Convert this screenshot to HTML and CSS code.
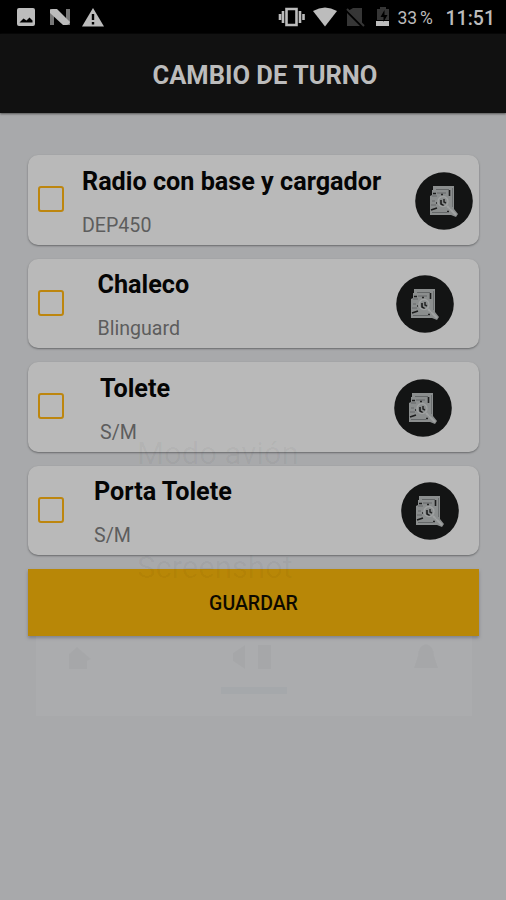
FILE: index.html
```
<!DOCTYPE html>
<html lang="es">
<head>
    <meta charset="UTF-8">
    <meta name="viewport" content="width=device-width, initial-scale=1.0">
    <link rel="stylesheet" href="styles.css">
    <title>Cambio de turno</title>
</head>
<body>

<!-- Icono compartido por todas las tarjetas -->
<svg width="0" height="0" class="defs">
    <symbol id="inspeccion" viewBox="0 0 58 58">
        <circle cx="29" cy="29" r="28.800" fill="#131414"/>
        <path d="M18 14h21v23l4 5-2 3-5-2H15V24l2-1v-5h1z" fill="#8b8e8e"/>
        <path d="M21 17.500h13M17 24h5M17 29h3M16 33h5M17 40.500h15M22 21h9" stroke="#646768" stroke-width="1" fill="none"/>
        <path d="M37.500 16v19" stroke="#6c6f70" stroke-width="1"/>
        <path d="M34.500 18v6M18 21.500h3M16 38l6-2M34 36l2 2M26 28v4l3 2" stroke="#1b1c1c" stroke-width="1.6" fill="none"/>
        <circle cx="28" cy="29.500" r="5" fill="none" stroke="#a0a2a2" stroke-width="1.3"/>
        <path d="M32 34l9 9" stroke="#a0a2a2" stroke-width="2"/>
        <path d="M29 27v3l2 1M32 39.500h2M26 22.500h2M21 31h1" stroke="#242525" stroke-width="1.5" fill="none"/>
    </symbol>
</svg>

<div class="status">
    <svg class="status-left" width="90" height="22" viewBox="0 0 90 22">
        <path fill="#bcbcbc" fill-rule="evenodd" d="M3 2h14q2 0 2 2v14q0 2-2 2H3q-2 0-2-2V4q0-2 2-2zM3.500 16.500h13v-2l-3-3-3 3-3-2z"/>
        <path fill="#777" d="M34 3h4v16h-4zM50 3h4v16h-4z"/>
        <path fill="#bcbcbc" d="M34 4q1-1 3-1h4l13 13q-1 3-4 3h-3L34 7z"/>
        <path fill="#bcbcbc" d="M77 2l11 18.500H66z"/>
        <path stroke="#000" stroke-width="2.400" d="M77 8v6M77 16v2.500"/>
    </svg>
    <svg class="status-icons" width="112" height="22" viewBox="0 0 112 22">
        <path fill="none" stroke="#bcbcbc" stroke-width="2.600" d="M8.500 3h10v16h-10zM5 5v12M22 5v12M2 8v6M25.500 8v6"/>
        <path fill="#bcbcbc" d="M35 5q12-7 24 0L47 20.500z"/>
        <path fill="#363636" d="M75 2h9v16L70 5zM69 7l13 13H69z"/>
        <path stroke="#363636" stroke-width="2" d="M69 3l17 17"/>
        <path fill="#363636" d="M102 1h6v2h3v11H99V3h3z"/>
        <path fill="#bcbcbc" d="M98 15h13v5H98z"/>
        <path fill="#000" d="M106.500 4l-4 7h3v5l4-7h-3z"/>
    </svg>
    <span class="battery">33 %</span>
    <span class="clock">11:51</span>
</div>

<header class="header">CAMBIO DE TURNO</header>

<main class="list">
    <div class="card radio">
        <div class="check"></div>
        <div class="info">
            <div class="name">Radio con base y cargador</div>
            <div class="detail">DEP450</div>
        </div>
        <svg class="icon"><use href="#inspeccion"/></svg>
    </div>
    <div class="card chaleco">
        <div class="check"></div>
        <div class="info">
            <div class="name">Chaleco</div>
            <div class="detail">Blinguard</div>
        </div>
        <svg class="icon"><use href="#inspeccion"/></svg>
    </div>
    <div class="card tolete">
        <div class="check"></div>
        <div class="info">
            <div class="name">Tolete</div>
            <div class="detail">S/M</div>
        </div>
        <svg class="icon"><use href="#inspeccion"/></svg>
    </div>
    <div class="card porta">
        <div class="check"></div>
        <div class="info">
            <div class="name">Porta Tolete</div>
            <div class="detail">S/M</div>
        </div>
        <svg class="icon"><use href="#inspeccion"/></svg>
    </div>
    <button class="save">GUARDAR</button>
</main>

<!-- Menú de apagado, casi desvanecido -->
<div class="power-menu" aria-hidden="true">
    <div class="option">Modo avión</div>
    <div class="option">Screenshot</div>
    <div class="modes">
        <svg width="28" height="28" viewBox="0 0 28 28"><path d="M3 11l8-7 14 12-4 2v8H3z"/></svg>
        <svg width="44" height="28" viewBox="0 0 44 28"><path d="M14 2v24L2 18v-8zM27 2h13v24H27z"/></svg>
        <svg width="28" height="28" viewBox="0 0 28 28"><path d="M14 1q8 2 8 12l4 12H2l4-12q0-10 8-12z"/></svg>
    </div>
    <div class="mark"></div>
</div>

</body>
</html>
```
FILE: styles.css
```
body {
    margin: 0;
    height: 900px;
    position: relative;
    overflow: hidden;
    background: #a8a9ab;
    font-family: Roboto, "Liberation Sans", sans-serif;
}

.defs {
    position: absolute;
}

.status {
    height: 34px;
    box-sizing: border-box;
    padding: 0 11px 0 16px;
    display: flex;
    align-items: center;
    background: #000;
    color: #bcbcbc;
}

.status-icons {
    margin-left: auto;
}

.battery {
    width: 48px;
    margin-left: 8px;
    font-size: 17.500px;
    word-spacing: -1.500px;
    white-space: nowrap;
    margin-top: 1px;
}

.clock {
    font-size: 19.500px;
    font-weight: 500;
    margin-top: 2px;
}

.header {
    height: 79px;
    box-sizing: border-box;
    padding: 3px 0 0 24px;
    display: flex;
    align-items: center;
    justify-content: center;
    background: #111;
    color: #bcbcbc;
    font-size: 25.500px;
    font-weight: 700;
    box-shadow: 0 1px 2px #555;
}

.list {
    padding: 42px 27px 0 28px;
    display: flex;
    flex-direction: column;
    gap: 14px;
}

.card {
    height: 89.5px;
    box-sizing: border-box;
    padding-left: 10px;
    display: flex;
    align-items: center;
    border-radius: 10px;
    background: #b9b9b9;
    box-shadow: 0 1px 2px #68696b;
}

.check {
    width: 26px;
    height: 26px;
    box-sizing: border-box;
    margin-top: -1px;
    border: 2px solid #bd860f;
    border-radius: 3px;
}

.info {
    align-self: flex-start;
    margin-top: 11.500px;
}

.name {
    line-height: 30px;
    font-size: 25.200px;
    font-weight: 700;
    color: #050505;
    white-space: nowrap;
}

.detail {
    margin-top: 17px;
    line-height: 24px;
    font-size: 19.600px;
    color: #5d5d5d;
}

.icon {
    width: 58px;
    height: 58px;
    margin-left: auto;
    margin-top: 2px;
}

/* El texto y el icono se separan según el largo del nombre */
.radio { padding-right: 6px; }
.radio .info { margin-left: 18px; }
.chaleco { padding-right: 25px; }
.chaleco .info { margin-left: 33.500px; }
.tolete { padding-right: 27px; }
.tolete .info { margin-left: 36px; }
.porta { padding-right: 20px; }
.porta .info { margin-left: 30px; }

.save {
    height: 67px;
    border: 0;
    padding: 2px 0 0;
    background: #b88707;
    color: #0d0a00;
    font-family: inherit;
    font-size: 19.500px;
    font-weight: 500;
    box-shadow: 0 2px 3px #7d7f88;
}

.power-menu {
    position: absolute;
    left: 36px;
    top: 436px;
    width: 436px;
    height: 280px;
    box-sizing: border-box;
    color: rgba(0, 0, 0, 0.04);
    background: linear-gradient(transparent 200px, rgba(255, 255, 255, 0.04) 200px);
    pointer-events: none;
}

.option {
    height: 36px;
    padding-left: 101px;
    font-size: 31px;
    line-height: 36px;
}

.option:nth-child(1) { margin-bottom: 78px; }
.option:nth-child(2) { margin-bottom: 57px; }

.modes {
    display: flex;
    justify-content: space-between;
    padding: 0 32px 0 30px;
}

.modes svg {
    fill: rgba(0, 0, 0, 0.022);
}

.mark {
    width: 66px;
    height: 7px;
    margin: 16px auto 0;
    background: rgba(0, 60, 80, 0.03);
}
```
